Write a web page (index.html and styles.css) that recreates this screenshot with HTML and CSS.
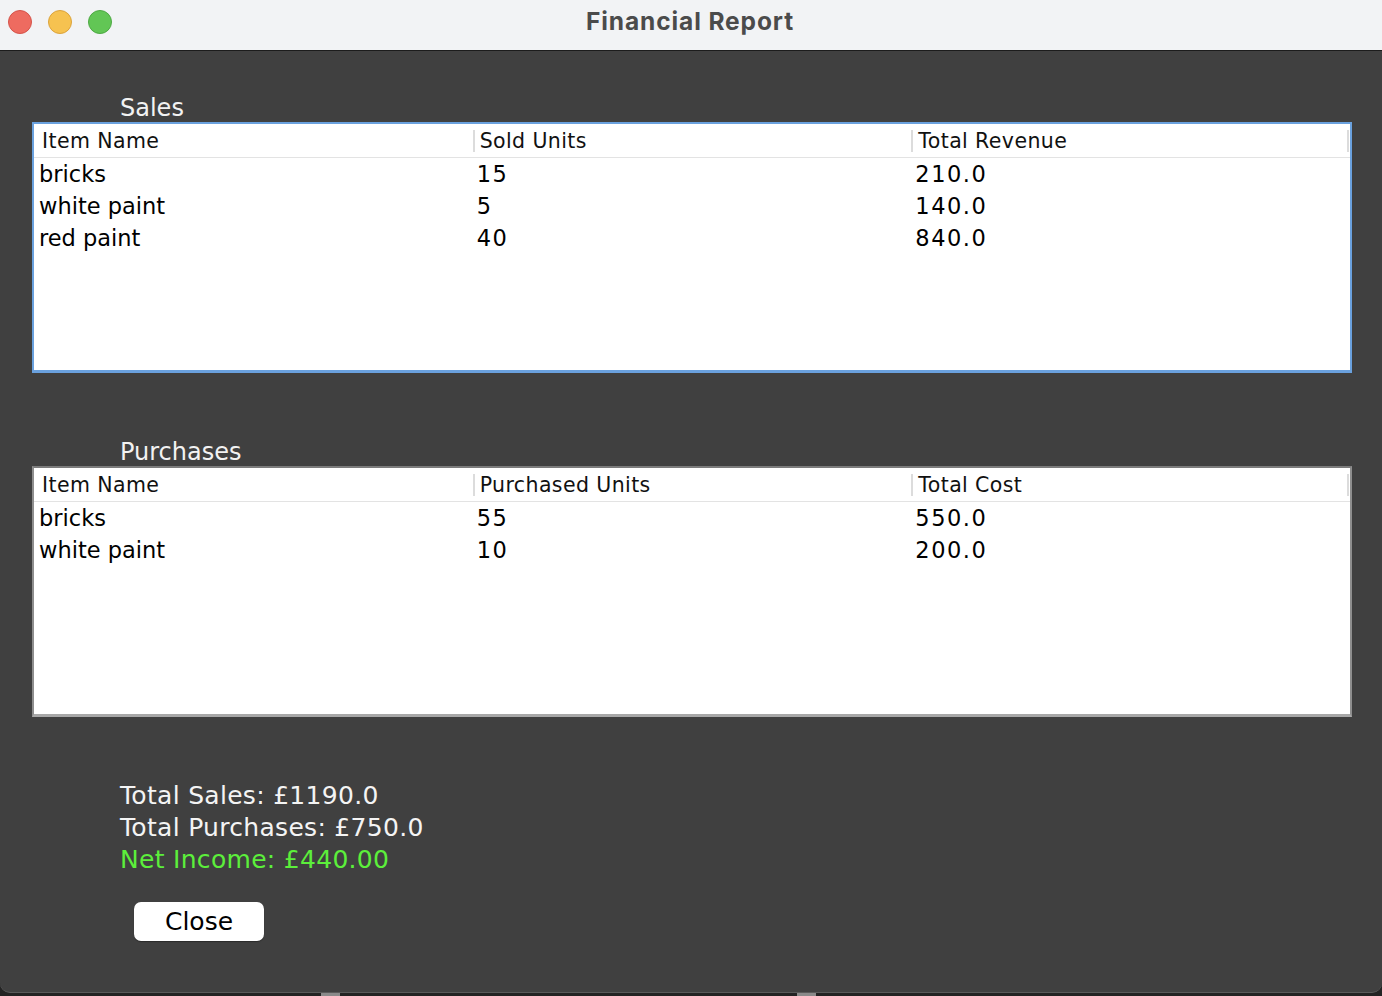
FILE: index.html
```html
<!DOCTYPE html>
<html>
<head>
<meta charset="utf-8">
<title>Financial Report</title>
<link rel="stylesheet" href="styles.css">
</head>
<body>
<div class="window">
  <div class="titlebar">
    <div class="lights">
      <span class="light red"></span>
      <span class="light yellow"></span>
      <span class="light green"></span>
    </div>
    <div class="title">Financial Report</div>
  </div>
  <div class="content">
    <div class="label first">Sales</div>
    <div class="box focused">
      <div class="row head">
        <div class="cell"><span class="txt">Item Name</span></div>
        <div class="cell"><span class="sep"></span><span class="txt">Sold Units</span></div>
        <div class="cell"><span class="sep"></span><span class="txt">Total Revenue</span><span class="sep end"></span></div>
      </div>
      <div class="row data"><div class="cell">bricks</div><div class="cell num">15</div><div class="cell num">210.0</div></div>
      <div class="row data"><div class="cell">white paint</div><div class="cell num">5</div><div class="cell num">140.0</div></div>
      <div class="row data"><div class="cell">red paint</div><div class="cell num">40</div><div class="cell num">840.0</div></div>
    </div>
    <div class="label second">Purchases</div>
    <div class="box plain">
      <div class="row head">
        <div class="cell"><span class="txt">Item Name</span></div>
        <div class="cell"><span class="sep"></span><span class="txt">Purchased Units</span></div>
        <div class="cell"><span class="sep"></span><span class="txt">Total Cost</span><span class="sep end"></span></div>
      </div>
      <div class="row data"><div class="cell">bricks</div><div class="cell num">55</div><div class="cell num">550.0</div></div>
      <div class="row data"><div class="cell">white paint</div><div class="cell num">10</div><div class="cell num">200.0</div></div>
    </div>
    <div class="totals">
      <div class="line">Total Sales: £1190.0</div>
      <div class="line">Total Purchases: £750.0</div>
      <div class="line net">Net Income: £440.00</div>
    </div>
    <button class="close">Close</button>
  </div>
</div>
<div class="desk">
  <span class="handle h1"></span>
  <span class="handle h2"></span>
</div>
</body>
</html>
```

FILE: styles.css
```css
html, body {
  margin: 0;
  padding: 0;
}
body {
  width: 1382px;
  height: 996px;
  overflow: hidden;
  background: #232323;
  font-family: "DejaVu Sans", "Liberation Sans", sans-serif;
}
.window {
  height: 993px;
  box-sizing: border-box;
  background: #404040;
  border-bottom: 1px solid #5a5a5a;
  border-bottom-left-radius: 10px;
  border-bottom-right-radius: 10px;
  display: flex;
  flex-direction: column;
  overflow: hidden;
}
.titlebar {
  height: 50px;
  flex: 0 0 50px;
  background: #f2f3f5;
  border-bottom: 1px solid #1c1c1c;
  position: relative;
  display: flex;
  align-items: center;
  justify-content: center;
}
.lights {
  position: absolute;
  left: 8px;
  top: 10px;
  display: flex;
  gap: 16px;
}
.light {
  width: 24px;
  height: 24px;
  box-sizing: border-box;
  border-radius: 50%;
  display: block;
}
.red { background: #ee6b60; border: 1px solid #d5534a; }
.yellow { background: #f6c250; border: 1px solid #dca33c; }
.green { background: #62c655; border: 1px solid #4ea944; }
.title {
  font-family: "Inter", "Open Sans", sans-serif;
  font-weight: 700;
  font-size: 24.5px;
  letter-spacing: 0.9px;
  color: #4b4b4b;
  margin-left: -2px;
  margin-top: -9px;
}
.content {
  flex: 1;
  display: flex;
  flex-direction: column;
  padding: 0 30px 0 32px;
}
.label {
  height: 28px;
  line-height: 28px;
  font-size: 24px;
  color: #f2f2f2;
  margin-left: 88px;
}
.label.first { margin-top: 43px; }
.label.second { margin-top: 65px; }
.box {
  height: 251px;
  box-sizing: border-box;
  background: #ffffff;
  border: 2px solid #6aa1de;
  border-bottom-width: 3px;
}
.box.plain {
  border-color: #7c7c7c #8e8e8e #a8a8a8 #8e8e8e;
}
.row {
  display: grid;
  grid-template-columns: 1fr 1fr 1fr;
}
.row.head {
  height: 34px;
  box-sizing: border-box;
  border-bottom: 1px solid #e3e3e3;
  font-size: 20.5px;
  letter-spacing: 0.4px;
  color: #111;
}
.head .cell {
  display: flex;
  align-items: center;
  padding-left: 8px;
  white-space: nowrap;
}
.head .cell + .cell {
  padding-left: 0;
}
.sep {
  width: 2px;
  height: 22px;
  background: #dcdcdc;
  margin-right: 5px;
  flex: 0 0 2px;
  margin-top: 1px;
}
.sep.end {
  margin-left: auto;
  margin-right: 1px;
}
.row.data {
  height: 32px;
  line-height: 32px;
  font-size: 22.5px;
  color: #000;
}
.data .cell {
  padding-left: 5px;
  white-space: nowrap;
}
.data .cell.num {
  padding-left: 4px;
  letter-spacing: 1.5px;
}
.totals {
  margin-top: 63px;
  margin-left: 88px;
  font-size: 25px;
  letter-spacing: 0.3px;
  line-height: 32px;
  color: #f4f4f4;
}
.totals .net {
  color: #5cef3b;
}
.close {
  margin-top: 26px;
  margin-left: 102px;
  width: 130px;
  height: 39px;
  border: none;
  border-radius: 7px;
  background: #ffffff;
  font-family: "DejaVu Sans", sans-serif;
  font-size: 25px;
  color: #000;
  padding: 0;
  box-shadow: 0 1px 1px rgba(0,0,0,0.35);
  align-self: flex-start;
}
.desk {
  height: 3px;
  display: flex;
  position: relative;
}
.handle {
  height: 3px;
  width: 19px;
  background: #8a8a8a;
  display: block;
}
.h1 { margin-left: 321px; }
.h2 { margin-left: 457px; }
```
